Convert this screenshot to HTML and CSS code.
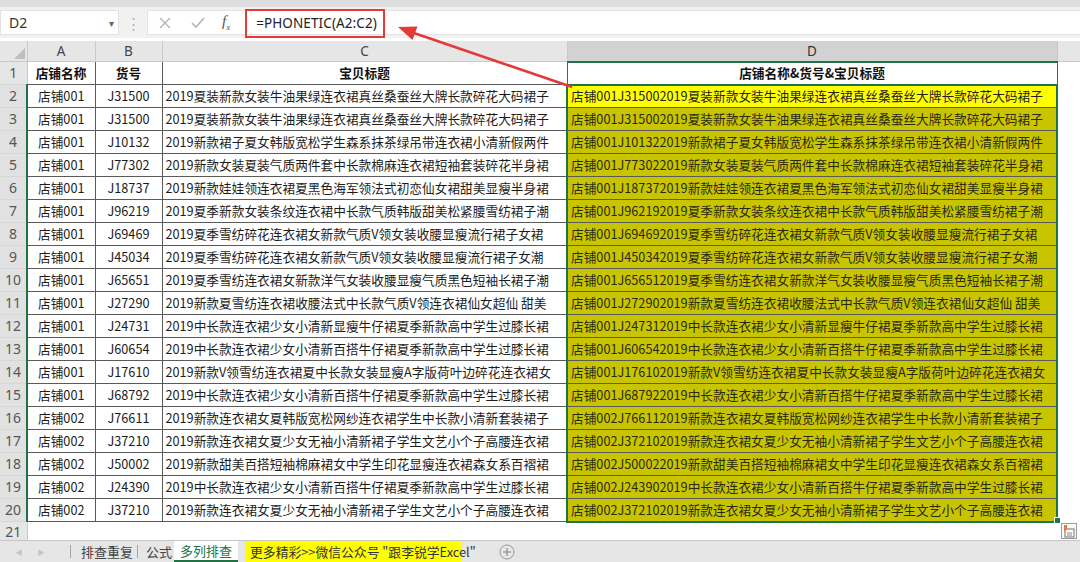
FILE: index.html
```html
<!DOCTYPE html>
<html lang="zh-CN">
<head>
    <meta charset="UTF-8">
    <title>多列排查</title>
    <link rel="stylesheet" href="styles.css">
</head>
<body>
<div class="app">
    <div class="topstrip"></div>
    <div class="fbar">
        <div class="namebox"><span>D2</span><span class="caret">&#9662;</span></div>
        <div class="grip">&#8942;</div>
        <div class="formula">
            <svg class="ficon" width="14" height="14" viewBox="0 0 14 14"><path d="M2 2 L12 12 M12 2 L2 12" stroke="#b5b5b5" stroke-width="1.4" fill="none"/></svg>
            <svg class="ficon" width="16" height="14" viewBox="0 0 16 14"><path d="M2 7 L6 11 L14 2" stroke="#b5b5b5" stroke-width="1.6" fill="none"/></svg>
            <span class="fx">f<sub>x</sub></span>
            <span class="ftext">=PHONETIC(A2:C2)</span>
        </div>
    </div>

    <table class="sheet">
        <colgroup>
            <col class="w-rh"><col class="w-a"><col class="w-b"><col class="w-c"><col class="w-d"><col class="w-e">
        </colgroup>
        <tr class="colhead">
            <th class="corner"><svg width="11" height="11" viewBox="0 0 12 12"><path d="M12 0 L12 12 L0 12 Z" fill="#bdbdbd"/></svg></th>
            <th>A</th><th>B</th><th>C</th><th class="sel">D</th><th></th>
        </tr>
        <tr class="head">
            <th class="rh">1</th>
            <td class="cen">店铺名称</td><td class="cen">货号</td><td class="cen">宝贝标题</td><td class="cen">店铺名称&amp;货号&amp;宝贝标题</td><td class="blank"></td>
        </tr>
        <tr><th class="rh on">2</th><td class="cen">店铺001</td><td class="cen">J31500</td><td>2019夏装新款女装牛油果绿连衣裙真丝桑蚕丝大牌长款碎花大码裙子</td><td class="d first">店铺001J315002019夏装新款女装牛油果绿连衣裙真丝桑蚕丝大牌长款碎花大码裙子</td><td class="blank"></td></tr>
        <tr><th class="rh on">3</th><td class="cen">店铺001</td><td class="cen">J31500</td><td>2019夏装新款女装牛油果绿连衣裙真丝桑蚕丝大牌长款碎花大码裙子</td><td class="d">店铺001J315002019夏装新款女装牛油果绿连衣裙真丝桑蚕丝大牌长款碎花大码裙子</td><td class="blank"></td></tr>
        <tr><th class="rh on">4</th><td class="cen">店铺001</td><td class="cen">J10132</td><td>2019新款裙子夏女韩版宽松学生森系抹茶绿吊带连衣裙小清新假两件</td><td class="d">店铺001J101322019新款裙子夏女韩版宽松学生森系抹茶绿吊带连衣裙小清新假两件</td><td class="blank"></td></tr>
        <tr><th class="rh on">5</th><td class="cen">店铺001</td><td class="cen">J77302</td><td>2019新款女装夏装气质两件套中长款棉麻连衣裙短袖套装碎花半身裙</td><td class="d">店铺001J773022019新款女装夏装气质两件套中长款棉麻连衣裙短袖套装碎花半身裙</td><td class="blank"></td></tr>
        <tr><th class="rh on">6</th><td class="cen">店铺001</td><td class="cen">J18737</td><td>2019新款娃娃领连衣裙夏黑色海军领法式初恋仙女裙甜美显瘦半身裙</td><td class="d">店铺001J187372019新款娃娃领连衣裙夏黑色海军领法式初恋仙女裙甜美显瘦半身裙</td><td class="blank"></td></tr>
        <tr><th class="rh on">7</th><td class="cen">店铺001</td><td class="cen">J96219</td><td>2019夏季新款女装条纹连衣裙中长款气质韩版甜美松紧腰雪纺裙子潮</td><td class="d">店铺001J962192019夏季新款女装条纹连衣裙中长款气质韩版甜美松紧腰雪纺裙子潮</td><td class="blank"></td></tr>
        <tr><th class="rh on">8</th><td class="cen">店铺001</td><td class="cen">J69469</td><td>2019夏季雪纺碎花连衣裙女新款气质V领女装收腰显瘦流行裙子女裙</td><td class="d">店铺001J694692019夏季雪纺碎花连衣裙女新款气质V领女装收腰显瘦流行裙子女裙</td><td class="blank"></td></tr>
        <tr><th class="rh on">9</th><td class="cen">店铺001</td><td class="cen">J45034</td><td>2019夏季雪纺碎花连衣裙女新款气质V领女装收腰显瘦流行裙子女潮</td><td class="d">店铺001J450342019夏季雪纺碎花连衣裙女新款气质V领女装收腰显瘦流行裙子女潮</td><td class="blank"></td></tr>
        <tr><th class="rh on">10</th><td class="cen">店铺001</td><td class="cen">J65651</td><td>2019夏季雪纺连衣裙女新款洋气女装收腰显瘦气质黑色短袖长裙子潮</td><td class="d">店铺001J656512019夏季雪纺连衣裙女新款洋气女装收腰显瘦气质黑色短袖长裙子潮</td><td class="blank"></td></tr>
        <tr><th class="rh on">11</th><td class="cen">店铺001</td><td class="cen">J27290</td><td>2019新款夏雪纺连衣裙收腰法式中长款气质V领连衣裙仙女超仙 甜美</td><td class="d">店铺001J272902019新款夏雪纺连衣裙收腰法式中长款气质V领连衣裙仙女超仙 甜美</td><td class="blank"></td></tr>
        <tr><th class="rh on">12</th><td class="cen">店铺001</td><td class="cen">J24731</td><td>2019中长款连衣裙少女小清新显瘦牛仔裙夏季新款高中学生过膝长裙</td><td class="d">店铺001J247312019中长款连衣裙少女小清新显瘦牛仔裙夏季新款高中学生过膝长裙</td><td class="blank"></td></tr>
        <tr><th class="rh on">13</th><td class="cen">店铺001</td><td class="cen">J60654</td><td>2019中长款连衣裙少女小清新百搭牛仔裙夏季新款高中学生过膝长裙</td><td class="d">店铺001J606542019中长款连衣裙少女小清新百搭牛仔裙夏季新款高中学生过膝长裙</td><td class="blank"></td></tr>
        <tr><th class="rh on">14</th><td class="cen">店铺001</td><td class="cen">J17610</td><td>2019新款V领雪纺连衣裙夏中长款女装显瘦A字版荷叶边碎花连衣裙女</td><td class="d">店铺001J176102019新款V领雪纺连衣裙夏中长款女装显瘦A字版荷叶边碎花连衣裙女</td><td class="blank"></td></tr>
        <tr><th class="rh on">15</th><td class="cen">店铺001</td><td class="cen">J68792</td><td>2019中长款连衣裙少女小清新百搭牛仔裙夏季新款高中学生过膝长裙</td><td class="d">店铺001J687922019中长款连衣裙少女小清新百搭牛仔裙夏季新款高中学生过膝长裙</td><td class="blank"></td></tr>
        <tr><th class="rh on">16</th><td class="cen">店铺002</td><td class="cen">J76611</td><td>2019新款连衣裙女夏韩版宽松网纱连衣裙学生中长款小清新套装裙子</td><td class="d">店铺002J766112019新款连衣裙女夏韩版宽松网纱连衣裙学生中长款小清新套装裙子</td><td class="blank"></td></tr>
        <tr><th class="rh on">17</th><td class="cen">店铺002</td><td class="cen">J37210</td><td>2019新款连衣裙女夏少女无袖小清新裙子学生文艺小个子高腰连衣裙</td><td class="d">店铺002J372102019新款连衣裙女夏少女无袖小清新裙子学生文艺小个子高腰连衣裙</td><td class="blank"></td></tr>
        <tr><th class="rh on">18</th><td class="cen">店铺002</td><td class="cen">J50002</td><td>2019新款甜美百搭短袖棉麻裙女中学生印花显瘦连衣裙森女系百褶裙</td><td class="d">店铺002J500022019新款甜美百搭短袖棉麻裙女中学生印花显瘦连衣裙森女系百褶裙</td><td class="blank"></td></tr>
        <tr><th class="rh on">19</th><td class="cen">店铺002</td><td class="cen">J24390</td><td>2019中长款连衣裙少女小清新百搭牛仔裙夏季新款高中学生过膝长裙</td><td class="d">店铺002J243902019中长款连衣裙少女小清新百搭牛仔裙夏季新款高中学生过膝长裙</td><td class="blank"></td></tr>
        <tr><th class="rh on">20</th><td class="cen">店铺002</td><td class="cen">J37210</td><td>2019新款连衣裙女夏少女无袖小清新裙子学生文艺小个子高腰连衣裙</td><td class="d last">店铺002J372102019新款连衣裙女夏少女无袖小清新裙子学生文艺小个子高腰连衣裙</td><td class="blank"></td></tr>
        <tr class="empty"><th class="rh">21</th><td class="blank"></td><td class="blank"></td><td class="blank"></td><td class="blank"></td><td class="blank"></td></tr>
    </table>

    <div class="tabs">
        <span class="nav">&#9664;</span>
        <span class="nav">&#9654;</span>
        <span class="sep first"></span>
        <span class="tab">排查重复</span>
        <span class="sep"></span>
        <span class="tab plain">公式</span>
        <span class="tab active">多列排查</span>
        <span class="tab promo">更多精彩&gt;&gt;微信公众号 "跟李锐学Excel"</span>
        <span class="plus">
            <svg width="16" height="16" viewBox="0 0 16 16"><circle cx="8" cy="8" r="7" fill="none" stroke="#9a9a9a" stroke-width="1"/><path d="M8 4 V12 M4 8 H12" stroke="#8a8a8a" stroke-width="1.2"/></svg>
        </span>
    </div>

    <!-- annotation over the screenshot -->
    <div class="redbox"></div>
    <svg class="arrow" width="1080" height="562" viewBox="0 0 1080 562">
        <line x1="572" y1="87" x2="408" y2="31" stroke="#e53935" stroke-width="2.6"/>
        <polygon points="398,27 417.5,26.5 412.5,40" fill="#e53935"/>
    </svg>
    <div class="handle"></div>
    <div class="paste">
        <svg width="16" height="16" viewBox="0 0 16 16">
            <rect x="0.5" y="0.5" width="15" height="15" fill="#fafafa" stroke="#9c9c9c"/>
            <rect x="4" y="6" width="9" height="8" fill="#fff" stroke="#707070"/>
            <path d="M3 2 L6 2 L6 6 L3 9 Z" fill="#e07b39"/>
            <path d="M6 10 H11 M6 12 H11" stroke="#8a8a8a" stroke-width="1"/>
        </svg>
    </div>
</div>
</body>
</html>
```

FILE: styles.css
```css
html, body {
    margin: 0;
    padding: 0;
}
body {
    width: 1080px;
    height: 562px;
    overflow: hidden;
    background-color: #fff;
    font-family: "Noto Sans CJK SC", "Noto Sans", sans-serif;
    color: #222;
}
.app {
    position: relative;
    width: 1080px;
    height: 562px;
    overflow: hidden;
}
.topstrip {
    height: 7px;
    background-color: #dedede;
}
.fbar {
    height: 31px;
    background-color: #f1f1f1;
    display: flex;
    align-items: flex-start;
    padding-top: 3px;
    box-sizing: border-box;
}
.namebox {
    width: 119px;
    height: 25px;
    background-color: #fff;
    border: 1px solid #e2e2e2;
    box-sizing: border-box;
    display: flex;
    align-items: center;
    justify-content: space-between;
    padding: 0 4px 0 8px;
    font-family: "Noto Sans", sans-serif;
    font-size: 14px;
    color: #333;
}
.caret {
    font-size: 10px;
    color: #666;
}
.grip {
    width: 28px;
    text-align: center;
    color: #b0b0b0;
    font-size: 15px;
    line-height: 25px;
}
.formula {
    flex: 1;
    height: 25px;
    background-color: #fff;
    border: 1px solid #e2e2e2;
    border-right: none;
    box-sizing: border-box;
    display: flex;
    align-items: center;
    padding-left: 10px;
    gap: 18px;
}
.fx {
    font-family: "Liberation Serif", serif;
    font-style: italic;
    font-size: 15px;
    color: #555;
    margin-left: -2px;
}
.fx sub {
    font-size: 9px;
}
.ftext {
    margin-left: 8px;
    font-family: "Noto Sans", sans-serif;
    font-size: 13.5px;
    color: #222;
    letter-spacing: 0.1px;
}
.sheet {
    margin-top: 3px;
    border-collapse: collapse;
    table-layout: fixed;
    width: 1080px;
    font-size: 12.7px;
}
.w-rh { width: 27px; }
.w-a { width: 68px; }
.w-b { width: 67px; }
.w-c { width: 405px; }
.w-d { width: 490px; }
.w-e { width: 23px; }
.sheet td, .sheet th {
    padding: 0;
    white-space: nowrap;
    overflow: hidden;
}
.sheet tr.colhead {
    height: 19px;
}
.colhead th {
    height: 18px;
    background-color: #e6e6e6;
    border-right: 1px solid #c9c9c9;
    border-bottom: 1px solid #c9c9c9;
    font-family: "Noto Sans", sans-serif;
    font-weight: normal;
    font-size: 13.5px;
    color: #444;
    line-height: 16px;
}
.colhead th.sel {
    background-color: #d2d2d2;
    border-bottom: 2px solid #217346;
    color: #333;
}
.colhead th.corner {
    text-align: right;
    vertical-align: bottom;
    padding: 0 2px 2px 0;
    line-height: 0;
}
.sheet tr {
    height: 23px;
}
.sheet tr.empty {
    height: 20px;
}
.rh {
    background-color: #e6e6e6;
    border-right: 1px solid #c9c9c9;
    border-bottom: 1px solid #d6d6d6;
    font-family: "Noto Sans", sans-serif;
    font-weight: normal;
    font-size: 14px;
    line-height: 16px;
    color: #555;
    text-align: center;
}
.rh.on {
    border-right: 2px solid #217346;
    background-color: #e1e1e1;
}
.sheet td {
    border: 1px solid #5a5a5a;
    padding-left: 3px;
    color: #1c1c1c;
    line-height: 16px;
}
.sheet td.cen {
    text-align: center;
    padding-left: 0;
}
.head td {
    font-weight: bold;
    color: #111;
}
.sheet td.blank {
    border: none;
    background-color: #fff;
}
.sheet td.d {
    background-color: #c9c400;
    color: #2a2a10;
    border-left: 2px solid #217346;
    border-right: 2px solid #217346;
}
.sheet td.d.first {
    background-color: #ffff00;
    border-top: 2px solid #217346;
    color: #222;
}
.sheet td.d.last {
    border-bottom: 2px solid #217346;
}
.tabs {
    position: absolute;
    left: 0;
    right: 0;
    bottom: 0;
    height: 22px;
    box-sizing: border-box;
    padding-left: 8px;
    background-color: #e6e6e6;
    border-top: 1px solid #c6c6c6;
    display: flex;
    align-items: stretch;
    font-size: 13px;
    color: #444;
    white-space: nowrap;
}
.nav {
    width: 22px;
    font-size: 7px;
    color: #c4c4c4;
    display: flex;
    align-items: center;
    justify-content: center;
}
.sep {
    width: 1px;
    background-color: #a8a8a8;
    margin: 4px 8px 4px 4px;
}
.sep.first {
    margin-left: 18px;
    margin-right: 10px;
}
.tab {
    display: flex;
    align-items: center;
    line-height: 20px;
}
.tab.active {
    padding: 0 6px;
    background-color: #fff;
    color: #217346;
    border-bottom: 2px solid #217346;
}
.tab.plain {
    margin-right: 2px;
}
.tab.promo {
    margin-left: 7px;
    width: 217px;
    box-sizing: border-box;
    padding: 0 5px;
    background-color: #ffff00;
    color: #333;
    font-size: 12.8px;
}
.plus {
    display: flex;
    align-items: center;
    margin-left: 37px;
}
.redbox {
    position: absolute;
    left: 245px;
    top: 9px;
    width: 140px;
    height: 29px;
    border: 2px solid #e53935;
    box-sizing: border-box;
}
.arrow {
    position: absolute;
    left: 0;
    top: 0;
    pointer-events: none;
}
.handle {
    position: absolute;
    left: 1054px;
    top: 517px;
    width: 5px;
    height: 5px;
    background-color: #217346;
    border: 1px solid #fff;
}
.paste {
    position: absolute;
    left: 1061px;
    top: 523px;
    line-height: 0;
}
```
